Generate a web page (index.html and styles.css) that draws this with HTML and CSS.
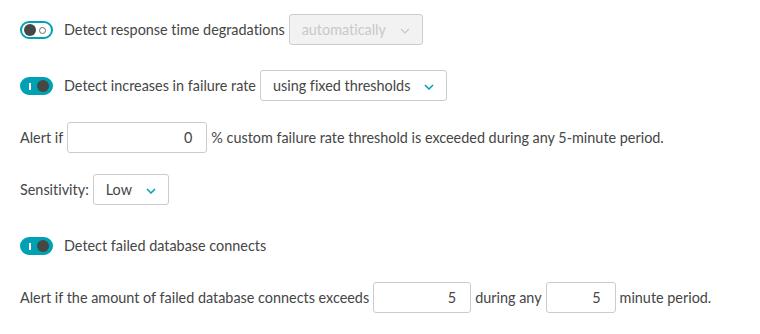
FILE: index.html
```html
<!DOCTYPE html>
<html lang="en">
<head>
  <meta charset="UTF-8">
  <meta name="viewport" content="width=device-width, initial-scale=1.0">
  <title>Failure detection settings</title>
  <link rel="stylesheet" href="styles.css">
</head>
<body>
  <div class="settings">
    <!-- Response time -->
    <div class="row">
      <span class="toggle off"><span class="knob"></span><span class="ring"></span></span>
      <span class="label">Detect response time degradations</span>
      <span class="select disabled">automatically
        <svg class="chevron" width="10" height="6" viewBox="0 0 10 6"><path d="M1 1l4 4 4-4" fill="none" stroke="currentColor" stroke-width="1.2"/></svg>
      </span>
    </div>

    <!-- Failure rate -->
    <div class="row spaced">
      <span class="toggle on"><span class="bar"></span><span class="knob"></span></span>
      <span class="label">Detect increases in failure rate</span>
      <span class="select">using fixed thresholds
        <svg class="chevron" width="10" height="6" viewBox="0 0 10 6"><path d="M1 1l4 4 4-4" fill="none" stroke="currentColor" stroke-width="1.5"/></svg>
      </span>
    </div>

    <div class="row">
      <span>Alert if</span>
      <span class="input wide">0</span>
      <span>% custom failure rate threshold is exceeded during any 5-minute period.</span>
    </div>

    <div class="row">
      <span>Sensitivity:</span>
      <span class="select">Low
        <svg class="chevron" width="10" height="6" viewBox="0 0 10 6"><path d="M1 1l4 4 4-4" fill="none" stroke="currentColor" stroke-width="1.5"/></svg>
      </span>
    </div>

    <!-- Database connects -->
    <div class="row spaced">
      <span class="toggle on"><span class="bar"></span><span class="knob"></span></span>
      <span class="label">Detect failed database connects</span>
    </div>

    <div class="row">
      <span>Alert if the amount of failed database connects exceeds</span>
      <span class="input medium">5</span>
      <span>during any</span>
      <span class="input small">5</span>
      <span>minute period.</span>
    </div>
  </div>
</body>
</html>
```

FILE: styles.css
```css
body {
  margin: 0;
  padding: 14px 20px;
  background-color: #fff;
  font-family: Lato, "Open Sans", sans-serif;
  font-size: 14.4px;
  font-variant-ligatures: none;
  color: #454646;
}

/* colonne sans fusion des marges */
.settings {
  display: flex;
  flex-direction: column;
  gap: 21px;
}

.row {
  display: flex;
  align-items: center;
  gap: 4px;
  height: 31px;
}

.row.spaced {
  margin-top: 4px;
}

.toggle {
  position: relative;
  box-sizing: border-box;
  width: 33px;
  height: 18px;
  border: 2px solid #00a1b2;
  border-radius: 9px;
  margin-right: 7px;
  flex-shrink: 0;
}

.toggle .knob {
  position: absolute;
  top: 1px;
  width: 12px;
  height: 12px;
  border-radius: 50%;
  background-color: #454646;
}

.toggle.off .knob {
  left: 2px;
}

.toggle.off .ring {
  position: absolute;
  top: 4px;
  right: 5px;
  box-sizing: border-box;
  width: 7px;
  height: 7px;
  border: 1.5px solid #6d6d6d;
  border-radius: 50%;
}

.toggle.on {
  background-color: #00a1b2;
}

.toggle.on .knob {
  right: 2px;
}

.toggle.on .bar {
  position: absolute;
  top: 4px;
  left: 7px;
  width: 2px;
  height: 7px;
  background-color: #fff;
}

.select {
  display: flex;
  align-items: center;
  gap: 14px;
  box-sizing: border-box;
  height: 31px;
  padding: 0 12px;
  border: 1px solid #ccc;
  border-radius: 3px;
  background-color: #fff;
}

.chevron {
  color: #00a1b2;
  margin-top: 2px;
}

.select.disabled {
  background-color: #f2f2f2;
  color: #c9c9c9;
}

.select.disabled .chevron {
  color: #c9c9c9;
}

.input {
  box-sizing: border-box;
  height: 31px;
  line-height: 29px;
  padding-right: 14px;
  border: 1px solid #ccc;
  border-radius: 3px;
  text-align: right;
}

.input.wide {
  width: 140px;
}

.input.medium {
  width: 98px;
}

.input.small {
  width: 70px;
}
```
